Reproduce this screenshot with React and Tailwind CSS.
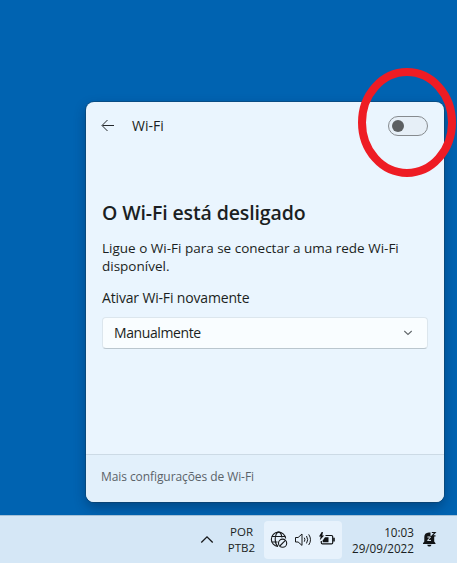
import React from "react";

function BackArrow() {
  return (
    <svg width="14" height="12" viewBox="0 0 14 12" fill="none" stroke="#24282b" strokeWidth="1" className="shrink-0">
      <path d="M13 5.500H1.500M6.500 0 1 5.500 6.500 11" />
    </svg>
  );
}

function GlobeOff() {
  return (
    <svg width="18" height="18" viewBox="0 0 18 18" fill="none" stroke="#17191b" strokeWidth="1.1" className="shrink-0">
      <path d="M8 15.500A7.200 7.200 0 1 1 15.700 7.500" />
      <path d="M7.800 15.500C6 13.800 5.200 11 5.200 8.300 5.200 4.400 6.700 1.100 8.500 1.100s3 2.400 3.400 5.400M1.800 5.500h13.400M1.800 11h5.700" />
      <circle cx="12.600" cy="12.200" r="4.100" />
      <path d="m9.800 15 5.600-5.600" />
    </svg>
  );
}

function Speaker() {
  return (
    <svg width="18" height="16" viewBox="0 0 18 16" fill="none" stroke="#17191b" strokeWidth="1" className="shrink-0">
      <path d="M1.500 5.500h2.600L8 2v11.400l-3.900-3.400H1.500z" strokeLinejoin="round" />
      <path d="M10.300 5.700q1.200 2 0 4M12.500 4q2.400 3.700 0 7.400M14.700 2.400q3.600 5.300 0 10.600" />
    </svg>
  );
}

function Battery() {
  return (
    <svg width="18" height="16" viewBox="0 0 18 16" className="shrink-0">
      <path d="M7.500 3.500h6q1.200 0 1.200 1.200v6q0 1.200-1.200 1.200h-9q-1.200 0-1.200-1.200V9" fill="none" stroke="#111315" strokeWidth="1.2" />
      <path d="M15.200 5.800h1.600v3.700h-1.600z" fill="#111315" />
      <path d="M7 5.300h3.500v5H4.700V8.600z" fill="#111315" />
      <path d="M3.800-.2 1 4.500h1.700L1.800 8.200l4.400-4.700H4.300L5 -.2z" fill="#111315" />
    </svg>
  );
}

function Bell() {
  return (
    <svg width="15" height="17" viewBox="0 0 15 17" className="shrink-0">
      <path d="M2.300 10.500V6q0-4.300 4.500-4.600h1.700v3.700h3.700v5.400l1.300 1.700v.7H1v-.7zM5.200 13.700h4.300q-.5 1.900-2.200 1.900t-2.100-1.900z" fill="#111315" />
      <path d="M9.800 1.500h3.400L10 4.900h3.500" fill="none" stroke="#111315" strokeWidth="1.1" />
      <path d="M5.400 6h3.100L5.500 9.400H9" fill="none" stroke="#e6f2fb" strokeWidth="1" />
    </svg>
  );
}

export default function App() {
  return (
    <div className="relative flex h-[563px] w-[457px] flex-col overflow-hidden bg-[#0063b1] font-['Open_Sans','Noto_Sans',sans-serif] text-[#1b1f22]">
      <main className="h-[515px] shrink-0 pl-[86px] pt-[102px]">
        <section className="flex h-[400px] w-[358px] flex-col overflow-hidden rounded-lg bg-[#eaf5fe] shadow-[0_0_0_1px_rgba(20,55,80,0.4),0_5px_12px_rgba(0,25,60,0.38)]">
          <header className="flex h-12 shrink-0 items-center pl-[15px] pr-4">
            <BackArrow />
            <h1 className="ml-[17px] text-[14px] leading-5">Wi-Fi</h1>
            <div className="ml-auto flex h-5 w-10 items-center rounded-full border border-[#868b8f] bg-[#e6eff7] pl-[3px]">
              <span className="size-3 rounded-full bg-[#5c5f61]" />
            </div>
          </header>
          <div className="flex flex-1 flex-col px-4 pt-[49px]">
            <h2 className="whitespace-nowrap text-[19.500px] font-semibold leading-7 tracking-[-0.12px]">O Wi-Fi está desligado</h2>
            <p className="mt-[12px] whitespace-nowrap text-[13.500px] leading-[18px]">
              Ligue o Wi-Fi para se conectar a uma rede Wi-Fi<br />disponível.
            </p>
            <p className="mt-[13px] whitespace-nowrap text-[14px] leading-5 tracking-[-0.16px]">Ativar Wi-Fi novamente</p>
            <div className="mt-[9px] flex h-8 w-[326px] shrink-0 items-center justify-between rounded border border-[#dce6ed] border-b-[#bac6ce] bg-[#f9fdff] pl-[11px] pr-[14px]">
              <span className="text-[14px] leading-5 tracking-[-0.4px]">Manualmente</span>
              <svg width="10" height="6" viewBox="0 0 10 6" fill="none" stroke="#62676b" strokeWidth="1.1"><path d="m1.300 1 3.700 3.400L8.700 1" /></svg>
            </div>
          </div>
          <footer className="flex h-12 shrink-0 items-center border-t border-[#ccdae5] bg-[#e2f0fb] pl-[15px] pb-[3px]">
            <span className="whitespace-nowrap text-[12px] leading-4 tracking-[-0.08px] text-[#5b6369]">Mais configurações de Wi-Fi</span>
          </footer>
        </section>
      </main>
      <footer className="flex h-12 shrink-0 items-center border-t border-[#a5c1d7] bg-[#d5e7f6] pl-[200px]">
        <svg width="14" height="9" viewBox="0 0 14 9" fill="none" stroke="#17191b" strokeWidth="1.3" className="shrink-0"><path d="m1.300 7.500 5.700-5.700 5.700 5.700" /></svg>
        <div className="ml-[8px] flex w-[39px] shrink-0 flex-col text-center text-[11.500px] leading-4"><span>POR</span><span>PTB2</span></div>
        <div className="ml-[3px] flex h-[38px] w-[78px] shrink-0 items-center gap-[6px] rounded bg-[#e7f2fc] pl-[6px]">
          <GlobeOff /><Speaker /><Battery />
        </div>
        <div className="ml-[4px] flex w-[68px] shrink-0 flex-col items-end whitespace-nowrap text-[11.700px] leading-4"><span>10:03</span><span>29/09/2022</span></div>
        <div className="ml-2"><Bell /></div>
      </footer>
      <svg width="100" height="112" viewBox="0 0 100 112" className="pointer-events-none absolute left-[357px] top-[67px]">
        <ellipse cx="50" cy="55.500" rx="45" ry="50.500" fill="none" stroke="#ee1c24" strokeWidth="8" />
      </svg>
    </div>
  );
}
